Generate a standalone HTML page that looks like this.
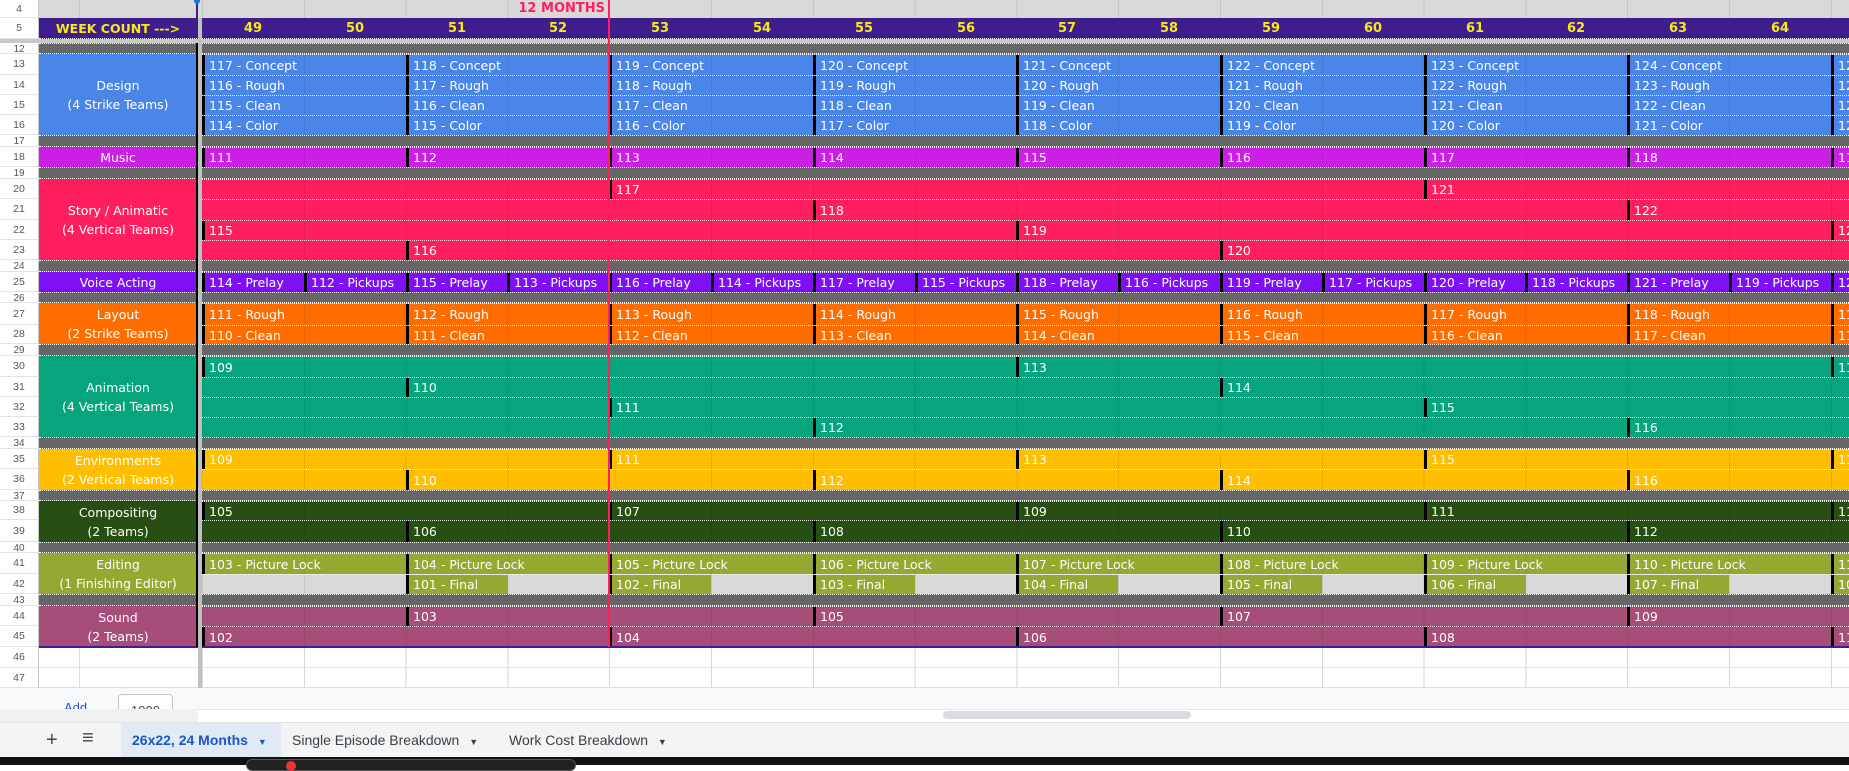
<!DOCTYPE html>
<html><head><meta charset="utf-8">
<style>
*{margin:0;padding:0;box-sizing:border-box}
body{width:1849px;height:765px;overflow:hidden;background:#fff;font-family:"DejaVu Sans","Liberation Sans",sans-serif;position:relative}
.a{position:absolute}
.rh{position:absolute;left:0;width:39px;background:#fff;color:#555;font-size:10.5px;text-align:center;border-right:1px solid #c6c6c6;border-bottom:1px solid #e2e2e2;font-family:"Liberation Sans",sans-serif}
.row{position:absolute;left:202px;right:0;overflow:hidden;border-top:1px dotted rgba(255,255,255,.85);background-image:repeating-linear-gradient(90deg,rgba(0,0,0,.09) 0 1px,transparent 1px 101.8px);color:#fff;font-size:12.5px}
.gap{position:absolute;left:39px;right:0;background:#666;border-top:1px dotted #fff;border-bottom:1px dotted #fff}
.lab{position:absolute;left:39px;width:158px;color:#fff;font-size:12.5px;text-align:center;display:flex;align-items:center;justify-content:center;line-height:19px}
.i{position:absolute;top:0;bottom:0;border-left:3px solid #000;padding-left:4px;white-space:nowrap;display:flex;align-items:center}
.wk{position:absolute;top:0;height:21px;line-height:21px;width:102px;text-align:center;color:#f5ec12;font-weight:bold;font-size:13px}
.grid{background-image:repeating-linear-gradient(90deg,#c4c4c4 0 1px,transparent 1px 101.8px)}
</style></head><body>

<div class="rh" style="top:0;height:18px;line-height:18px">4</div>
<div class="rh" style="top:18px;height:21px;line-height:21px">5</div>
<div class="a" style="left:0;top:39px;width:1849px;height:4px;background:#c8c8c8"></div>
<div class="rh" style="top:43px;height:11px;line-height:13px;font-size:10px">12</div>
<div class="rh" style="top:54px;height:21px;line-height:21px">13</div>
<div class="rh" style="top:75px;height:20px;line-height:20px">14</div>
<div class="rh" style="top:95px;height:20px;line-height:20px">15</div>
<div class="rh" style="top:115px;height:20px;line-height:20px">16</div>
<div class="rh" style="top:135px;height:12px;line-height:14px;font-size:10px">17</div>
<div class="rh" style="top:147px;height:20px;line-height:20px">18</div>
<div class="rh" style="top:167px;height:12px;line-height:14px;font-size:10px">19</div>
<div class="rh" style="top:179px;height:20px;line-height:20px">20</div>
<div class="rh" style="top:199px;height:21px;line-height:21px">21</div>
<div class="rh" style="top:220px;height:20px;line-height:20px">22</div>
<div class="rh" style="top:240px;height:20px;line-height:20px">23</div>
<div class="rh" style="top:260px;height:12px;line-height:14px;font-size:10px">24</div>
<div class="rh" style="top:272px;height:20px;line-height:20px">25</div>
<div class="rh" style="top:292px;height:11px;line-height:13px;font-size:10px">26</div>
<div class="rh" style="top:303px;height:22px;line-height:22px">27</div>
<div class="rh" style="top:325px;height:19px;line-height:19px">28</div>
<div class="rh" style="top:344px;height:12px;line-height:14px;font-size:10px">29</div>
<div class="rh" style="top:356px;height:21px;line-height:21px">30</div>
<div class="rh" style="top:377px;height:20px;line-height:20px">31</div>
<div class="rh" style="top:397px;height:20px;line-height:20px">32</div>
<div class="rh" style="top:417px;height:20px;line-height:20px">33</div>
<div class="rh" style="top:437px;height:12px;line-height:14px;font-size:10px">34</div>
<div class="rh" style="top:449px;height:20px;line-height:20px">35</div>
<div class="rh" style="top:469px;height:21px;line-height:21px">36</div>
<div class="rh" style="top:490px;height:11px;line-height:13px;font-size:10px">37</div>
<div class="rh" style="top:501px;height:19px;line-height:19px">38</div>
<div class="rh" style="top:520px;height:22px;line-height:22px">39</div>
<div class="rh" style="top:542px;height:11px;line-height:13px;font-size:10px">40</div>
<div class="rh" style="top:553px;height:21px;line-height:21px">41</div>
<div class="rh" style="top:574px;height:20px;line-height:20px">42</div>
<div class="rh" style="top:594px;height:12px;line-height:14px;font-size:10px">43</div>
<div class="rh" style="top:606px;height:20px;line-height:20px">44</div>
<div class="rh" style="top:626px;height:21px;line-height:21px">45</div>
<div class="rh" style="top:647px;height:21px;line-height:21px">46</div>
<div class="rh" style="top:668px;height:20px;line-height:20px">47</div>

<!-- row 4 -->
<div class="a" style="left:39px;right:0;top:0;height:18px;background:#d9d9d9"></div>
<div class="a grid" style="left:202px;right:0;top:0;height:18px"></div>
<div class="a" style="left:79px;top:0;width:1px;height:18px;background:#c4c4c4"></div>
<div class="a" style="left:480px;top:0;width:125px;height:18px;line-height:18px;text-align:right;color:#ff1f5e;font-weight:bold;font-size:13px">12 MONTHS</div>

<!-- row 5 header -->
<div class="a" style="left:39px;right:0;top:18px;height:21px;background:#3f1d8c;border-bottom:1px dotted #fff"></div>
<div class="a" style="left:39px;top:18px;width:158px;height:21px;line-height:21px;text-align:center;color:#f5ec12;font-weight:bold;font-size:12.5px">WEEK COUNT ---&gt;</div>
<div class="a" style="left:202px;top:18px;right:0;height:21px">
<div class="wk" style="left:0">49</div><div class="wk" style="left:102px">50</div><div class="wk" style="left:204px">51</div><div class="wk" style="left:305px">52</div><div class="wk" style="left:407px">53</div><div class="wk" style="left:509px">54</div><div class="wk" style="left:611px">55</div><div class="wk" style="left:713px">56</div><div class="wk" style="left:814px">57</div><div class="wk" style="left:916px">58</div><div class="wk" style="left:1018px">59</div><div class="wk" style="left:1120px">60</div><div class="wk" style="left:1222px">61</div><div class="wk" style="left:1323px">62</div><div class="wk" style="left:1425px">63</div><div class="wk" style="left:1527px">64</div>
</div>

<div class="gap" style="top:43px;height:11px"></div>
<div class="gap" style="top:135px;height:12px"></div>
<div class="gap" style="top:167px;height:12px"></div>
<div class="gap" style="top:260px;height:12px"></div>
<div class="gap" style="top:292px;height:11px"></div>
<div class="gap" style="top:344px;height:12px"></div>
<div class="gap" style="top:437px;height:12px"></div>
<div class="gap" style="top:490px;height:11px"></div>
<div class="gap" style="top:542px;height:11px"></div>
<div class="gap" style="top:594px;height:12px"></div>

<div class="lab" style="top:54px;height:81px;background:#4a86e8">Design<br>(4 Strike Teams)</div>
<div class="lab" style="top:147px;height:20px;background:#cc1fe6">Music</div>
<div class="lab" style="top:179px;height:81px;background:#ff1f5e">Story / Animatic<br>(4 Vertical Teams)</div>
<div class="lab" style="top:272px;height:20px;background:#7f10f5">Voice Acting</div>
<div class="lab" style="top:303px;height:41px;background:#ff6d01">Layout<br>(2 Strike Teams)</div>
<div class="lab" style="top:356px;height:81px;background:#07a57e">Animation<br>(4 Vertical Teams)</div>
<div class="lab" style="top:449px;height:41px;background:#ffbf00">Environments<br>(2 Vertical Teams)</div>
<div class="lab" style="top:501px;height:41px;background:#274e13">Compositing<br>(2 Teams)</div>
<div class="lab" style="top:553px;height:41px;background:#97a832">Editing<br>(1 Finishing Editor)</div>
<div class="lab" style="top:606px;height:41px;background:#a64d79">Sound<br>(2 Teams)</div>

<div class="row" style="top:54px;height:21px;background-color:#4a86e8">
<div class="i" style="left:0">117 - Concept</div><div class="i" style="left:204px">118 - Concept</div><div class="i" style="left:407px">119 - Concept</div><div class="i" style="left:611px">120 - Concept</div><div class="i" style="left:814px">121 - Concept</div><div class="i" style="left:1018px">122 - Concept</div><div class="i" style="left:1222px">123 - Concept</div><div class="i" style="left:1425px">124 - Concept</div><div class="i" style="left:1629px">125 - Concept</div></div>
<div class="row" style="top:75px;height:20px;background-color:#4a86e8">
<div class="i" style="left:0">116 - Rough</div><div class="i" style="left:204px">117 - Rough</div><div class="i" style="left:407px">118 - Rough</div><div class="i" style="left:611px">119 - Rough</div><div class="i" style="left:814px">120 - Rough</div><div class="i" style="left:1018px">121 - Rough</div><div class="i" style="left:1222px">122 - Rough</div><div class="i" style="left:1425px">123 - Rough</div><div class="i" style="left:1629px">124 - Rough</div></div>
<div class="row" style="top:95px;height:20px;background-color:#4a86e8">
<div class="i" style="left:0">115 - Clean</div><div class="i" style="left:204px">116 - Clean</div><div class="i" style="left:407px">117 - Clean</div><div class="i" style="left:611px">118 - Clean</div><div class="i" style="left:814px">119 - Clean</div><div class="i" style="left:1018px">120 - Clean</div><div class="i" style="left:1222px">121 - Clean</div><div class="i" style="left:1425px">122 - Clean</div><div class="i" style="left:1629px">123 - Clean</div></div>
<div class="row" style="top:115px;height:20px;background-color:#4a86e8">
<div class="i" style="left:0">114 - Color</div><div class="i" style="left:204px">115 - Color</div><div class="i" style="left:407px">116 - Color</div><div class="i" style="left:611px">117 - Color</div><div class="i" style="left:814px">118 - Color</div><div class="i" style="left:1018px">119 - Color</div><div class="i" style="left:1222px">120 - Color</div><div class="i" style="left:1425px">121 - Color</div><div class="i" style="left:1629px">122 - Color</div></div>

<div class="row" style="top:147px;height:20px;background-color:#cc1fe6">
<div class="i" style="left:0">111</div><div class="i" style="left:204px">112</div><div class="i" style="left:407px">113</div><div class="i" style="left:611px">114</div><div class="i" style="left:814px">115</div><div class="i" style="left:1018px">116</div><div class="i" style="left:1222px">117</div><div class="i" style="left:1425px">118</div><div class="i" style="left:1629px">119</div></div>

<div class="row" style="top:179px;height:20px;background-color:#ff1f5e">
<div class="i" style="left:407px">117</div><div class="i" style="left:1222px">121</div></div>
<div class="row" style="top:199px;height:21px;background-color:#ff1f5e">
<div class="i" style="left:611px">118</div><div class="i" style="left:1425px">122</div></div>
<div class="row" style="top:220px;height:20px;background-color:#ff1f5e">
<div class="i" style="left:0">115</div><div class="i" style="left:814px">119</div><div class="i" style="left:1629px">123</div></div>
<div class="row" style="top:240px;height:20px;background-color:#ff1f5e">
<div class="i" style="left:204px">116</div><div class="i" style="left:1018px">120</div></div>

<div class="row" style="top:272px;height:20px;background-color:#7f10f5">
<div class="i" style="left:0">114 - Prelay</div><div class="i" style="left:102px">112 - Pickups</div><div class="i" style="left:204px">115 - Prelay</div><div class="i" style="left:305px">113 - Pickups</div><div class="i" style="left:407px">116 - Prelay</div><div class="i" style="left:509px">114 - Pickups</div><div class="i" style="left:611px">117 - Prelay</div><div class="i" style="left:713px">115 - Pickups</div><div class="i" style="left:814px">118 - Prelay</div><div class="i" style="left:916px">116 - Pickups</div><div class="i" style="left:1018px">119 - Prelay</div><div class="i" style="left:1120px">117 - Pickups</div><div class="i" style="left:1222px">120 - Prelay</div><div class="i" style="left:1323px">118 - Pickups</div><div class="i" style="left:1425px">121 - Prelay</div><div class="i" style="left:1527px">119 - Pickups</div><div class="i" style="left:1629px">122 - Prelay</div></div>

<div class="row" style="top:303px;height:22px;background-color:#ff6d01">
<div class="i" style="left:0">111 - Rough</div><div class="i" style="left:204px">112 - Rough</div><div class="i" style="left:407px">113 - Rough</div><div class="i" style="left:611px">114 - Rough</div><div class="i" style="left:814px">115 - Rough</div><div class="i" style="left:1018px">116 - Rough</div><div class="i" style="left:1222px">117 - Rough</div><div class="i" style="left:1425px">118 - Rough</div><div class="i" style="left:1629px">119 - Rough</div></div>
<div class="row" style="top:325px;height:19px;background-color:#ff6d01">
<div class="i" style="left:0">110 - Clean</div><div class="i" style="left:204px">111 - Clean</div><div class="i" style="left:407px">112 - Clean</div><div class="i" style="left:611px">113 - Clean</div><div class="i" style="left:814px">114 - Clean</div><div class="i" style="left:1018px">115 - Clean</div><div class="i" style="left:1222px">116 - Clean</div><div class="i" style="left:1425px">117 - Clean</div><div class="i" style="left:1629px">118 - Clean</div></div>

<div class="row" style="top:356px;height:21px;background-color:#07a57e">
<div class="i" style="left:0">109</div><div class="i" style="left:814px">113</div><div class="i" style="left:1629px">117</div></div>
<div class="row" style="top:377px;height:20px;background-color:#07a57e">
<div class="i" style="left:204px">110</div><div class="i" style="left:1018px">114</div></div>
<div class="row" style="top:397px;height:20px;background-color:#07a57e">
<div class="i" style="left:407px">111</div><div class="i" style="left:1222px">115</div></div>
<div class="row" style="top:417px;height:20px;background-color:#07a57e">
<div class="i" style="left:611px">112</div><div class="i" style="left:1425px">116</div></div>

<div class="row" style="top:449px;height:20px;background-color:#ffbf00">
<div class="i" style="left:0">109</div><div class="i" style="left:407px">111</div><div class="i" style="left:814px">113</div><div class="i" style="left:1222px">115</div><div class="i" style="left:1629px">117</div></div>
<div class="row" style="top:469px;height:21px;background-color:#ffbf00">
<div class="i" style="left:204px">110</div><div class="i" style="left:611px">112</div><div class="i" style="left:1018px">114</div><div class="i" style="left:1425px">116</div></div>

<div class="row" style="top:501px;height:19px;background-color:#274e13">
<div class="i" style="left:0">105</div><div class="i" style="left:407px">107</div><div class="i" style="left:814px">109</div><div class="i" style="left:1222px">111</div><div class="i" style="left:1629px">113</div></div>
<div class="row" style="top:520px;height:22px;background-color:#274e13">
<div class="i" style="left:204px">106</div><div class="i" style="left:611px">108</div><div class="i" style="left:1018px">110</div><div class="i" style="left:1425px">112</div></div>

<div class="row" style="top:553px;height:21px;background-color:#97a832">
<div class="i" style="left:0">103 - Picture Lock</div><div class="i" style="left:204px">104 - Picture Lock</div><div class="i" style="left:407px">105 - Picture Lock</div><div class="i" style="left:611px">106 - Picture Lock</div><div class="i" style="left:814px">107 - Picture Lock</div><div class="i" style="left:1018px">108 - Picture Lock</div><div class="i" style="left:1222px">109 - Picture Lock</div><div class="i" style="left:1425px">110 - Picture Lock</div><div class="i" style="left:1629px">111 - Picture Lock</div></div>
<div class="row" style="top:574px;height:20px;background-color:#d9d9d9">
<div class="i" style="left:204px;width:102px;background:#97a832">101 - Final</div><div class="i" style="left:407px;width:102px;background:#97a832">102 - Final</div><div class="i" style="left:611px;width:102px;background:#97a832">103 - Final</div><div class="i" style="left:814px;width:102px;background:#97a832">104 - Final</div><div class="i" style="left:1018px;width:102px;background:#97a832">105 - Final</div><div class="i" style="left:1222px;width:102px;background:#97a832">106 - Final</div><div class="i" style="left:1425px;width:102px;background:#97a832">107 - Final</div><div class="i" style="left:1629px;width:102px;background:#97a832">108 - Final</div></div>

<div class="row" style="top:606px;height:20px;background-color:#a64d79">
<div class="i" style="left:204px">103</div><div class="i" style="left:611px">105</div><div class="i" style="left:1018px">107</div><div class="i" style="left:1425px">109</div></div>
<div class="row" style="top:626px;height:21px;background-color:#a64d79">
<div class="i" style="left:0">102</div><div class="i" style="left:407px">104</div><div class="i" style="left:814px">106</div><div class="i" style="left:1222px">108</div><div class="i" style="left:1629px">110</div></div>
<div class="a" style="left:39px;right:0;top:646px;height:2px;background:#3f1d8c"></div>

<!-- empty rows 46-47 -->
<div class="a" style="left:39px;right:0;top:648px;height:40px;background:#fff"></div>
<div class="a grid" style="left:202px;right:0;top:648px;height:40px;opacity:.7"></div>
<div class="a" style="left:39px;right:0;top:667px;height:1px;background:#e2e2e2"></div>
<div class="a" style="left:39px;right:0;top:687px;height:1px;background:#dcdcdc"></div>
<div class="a" style="left:79px;top:648px;width:1px;height:40px;background:#dcdcdc"></div>

<div class="a" style="left:196px;top:0;width:2px;height:18px;background:#3f1d8c"></div>
<div class="a" style="left:194px;top:-4px;width:6px;height:8px;border-radius:3px;background:#1a73e8"></div>
<div class="a" style="left:196px;top:43px;width:2px;height:604px;background:#000"></div>
<div class="a" style="left:198px;top:18px;width:4px;height:692px;background:#c0c0c0"></div>

<div class="a" style="left:608px;top:0;width:2px;height:647px;background:#ff1f5e"></div>

<div class="a" style="left:0;top:688px;width:1849px;height:21px;background:#f8f9fa;overflow:hidden">
<div class="a" style="left:64px;top:12px;color:#1a57c8;font-size:13px;font-family:'Liberation Sans',sans-serif">Add</div>
<div class="a" style="left:118px;top:6px;width:55px;height:22px;border:1px solid #c4c4c4;border-radius:4px;background:#fff;font-size:13px;text-align:center;line-height:20px;color:#444;font-family:'Liberation Sans',sans-serif"><span style="position:relative;top:6px">1000</span></div>
</div>
<div class="a" style="left:0;top:709px;width:1849px;height:13px;background:#fff;border-top:1px solid #e6e6e6"></div>
<div class="a" style="left:0;top:709px;width:198px;height:13px;background:#f1f1f1"></div>
<div class="a" style="left:943px;top:711px;width:248px;height:8px;border-radius:4px;background:#dadce0"></div>
<div class="a" style="left:0;top:722px;width:1849px;height:35px;background:#f3f4f5;border-top:1px solid #e3e3e3;font-family:'Liberation Sans',sans-serif;font-size:14px;color:#3c4043">
<div class="a" style="left:46px;top:6px;font-size:20px;color:#444">+</div>
<div class="a" style="left:82px;top:4px;font-size:20px;color:#444">≡</div>
<div class="a" style="left:121px;top:0;width:160px;height:34px;background:#e1e9f7;color:#1a57c8;font-weight:bold;line-height:34px;padding-left:11px">26x22, 24 Months <span style="font-size:9px;margin-left:6px">▼</span></div>
<div class="a" style="left:292px;top:0;height:34px;line-height:34px">Single Episode Breakdown <span style="font-size:9px;margin-left:6px">▼</span></div>
<div class="a" style="left:509px;top:0;height:34px;line-height:34px">Work Cost Breakdown <span style="font-size:9px;margin-left:6px">▼</span></div>
</div>
<div class="a" style="left:0;top:757px;width:1849px;height:8px;background:#111"></div>
<div class="a" style="left:246px;top:759px;width:330px;height:12px;border-radius:8px;border:1px solid #555;background:#222"></div>
<div class="a" style="left:286px;top:761px;width:10px;height:10px;border-radius:5px;background:#e33"></div>
</body></html>
